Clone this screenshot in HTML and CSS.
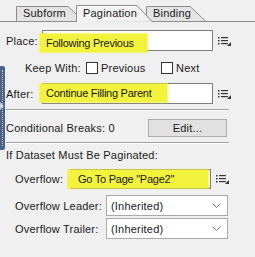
FILE: index.html
```html
<!DOCTYPE html>
<html lang="en">
<head>
    <meta charset="UTF-8">
    <title>Pagination</title>
    <link rel="stylesheet" href="styles.css">
</head>
<body>
    <div class="grip"><span class="grip-arrow"></span></div>
    <svg class="tabs" width="255" height="22" viewBox="0 0 255 22">
        <path d="M146.5 21.5 V6.5 H190 L206 21.5" fill="#e4e4e4" stroke="#8c8c8c"/>
        <path d="M16.5 21.5 V6.5 H68 L84 21.5" fill="#e4e4e4" stroke="#8c8c8c"/>
        <line x1="0" y1="21.5" x2="255" y2="21.5" stroke="#8c8c8c"/>
        <path d="M76.5 22 V5.5 H137 L152 21.5 H255" fill="#f2f2f2" stroke="#8c8c8c"/>
        <path d="M77.5 22 V6.5 H136.5" fill="none" stroke="#ffffff"/>
        <text x="23" y="17">Subform</text>
        <text x="83" y="17">Pagination</text>
        <text x="153" y="17">Binding</text>
    </svg>
    <div class="form">
        <div class="row place">
            <span class="label">Place:</span>
            <div class="field"><span class="hl hl-place">Following Previous</span></div>
            <svg class="list-icon" width="13" height="9" viewBox="0 0 13 9">
                <rect x="0" y="0" width="1.5" height="1.5" fill="#333"/>
                <rect x="0" y="3" width="1.5" height="1.5" fill="#333"/>
                <rect x="0" y="6" width="1.5" height="1.5" fill="#333"/>
                <rect x="3" y="0" width="7" height="1.2" fill="#333"/>
                <rect x="3" y="3" width="7" height="1.2" fill="#333"/>
                <rect x="3" y="6" width="7" height="1.2" fill="#333"/>
                <path d="M13 5 V9 H9 Z" fill="#333"/>
            </svg>
        </div>
        <div class="row keep">
            <span class="keep-label">Keep With:</span>
            <span class="check"></span><span class="check-text">Previous</span>
            <span class="check check-next"></span><span class="check-text">Next</span>
        </div>
        <div class="row after">
            <span class="label">After:</span>
            <div class="field"><span class="hl hl-after">Continue Filling Parent</span></div>
            <svg class="list-icon" width="13" height="9" viewBox="0 0 13 9">
                <rect x="0" y="0" width="1.5" height="1.5" fill="#333"/>
                <rect x="0" y="3" width="1.5" height="1.5" fill="#333"/>
                <rect x="0" y="6" width="1.5" height="1.5" fill="#333"/>
                <rect x="3" y="0" width="7" height="1.2" fill="#333"/>
                <rect x="3" y="3" width="7" height="1.2" fill="#333"/>
                <rect x="3" y="6" width="7" height="1.2" fill="#333"/>
                <path d="M13 5 V9 H9 Z" fill="#333"/>
            </svg>
        </div>
        <div class="sep sep-one"></div>
        <div class="row breaks">
            <span class="breaks-label">Conditional Breaks: 0</span>
            <button class="edit">Edit...</button>
        </div>
        <div class="sep sep-two"></div>
        <div class="heading">If Dataset Must Be Paginated:</div>
        <div class="row overflow">
            <span class="sub-label">Overflow:</span>
            <div class="field field-overflow"><span class="hl hl-overflow">Go To Page "Page2"</span></div>
            <svg class="list-icon" width="13" height="9" viewBox="0 0 13 9">
                <rect x="0" y="0" width="1.5" height="1.5" fill="#333"/>
                <rect x="0" y="3" width="1.5" height="1.5" fill="#333"/>
                <rect x="0" y="6" width="1.5" height="1.5" fill="#333"/>
                <rect x="3" y="0" width="7" height="1.2" fill="#333"/>
                <rect x="3" y="3" width="7" height="1.2" fill="#333"/>
                <rect x="3" y="6" width="7" height="1.2" fill="#333"/>
                <path d="M13 5 V9 H9 Z" fill="#333"/>
            </svg>
        </div>
        <div class="row select-row leader">
            <span class="sub-label select-label">Overflow Leader:</span>
            <div class="select">
                <span>(Inherited)</span>
                <svg width="9" height="5" viewBox="0 0 9 5"><path d="M0.5 0.5 L4.5 4.5 L8.5 0.5" fill="none" stroke="#7a7a7a"/></svg>
            </div>
        </div>
        <div class="row select-row trailer">
            <span class="sub-label select-label">Overflow Trailer:</span>
            <div class="select">
                <span>(Inherited)</span>
                <svg width="9" height="5" viewBox="0 0 9 5"><path d="M0.5 0.5 L4.5 4.5 L8.5 0.5" fill="none" stroke="#7a7a7a"/></svg>
            </div>
        </div>
    </div>
</body>
</html>
```

FILE: styles.css
```css
:root {
    --bg: #f0f0f0;
    --text: #1a1a1a;
    --yellow: #f3f33e;
    --field-border: #7d7d7d;
    --select-border: #a9a9a9;
}
* {
    box-sizing: border-box;
}
body {
    margin: 0;
    background: var(--bg);
    color: var(--text);
    font-family: "Liberation Sans", Arial, sans-serif;
    font-size: 11px;
    letter-spacing: 0.2px;
    position: relative;
    height: 257px;
    overflow: hidden;
}
/* splitter grip on the left edge */
.grip {
    position: absolute;
    left: 0;
    top: 66px;
    width: 5px;
    height: 84px;
    background: #4e6284;
    border-radius: 0 2px 2px 0;
}
.grip::before {
    content: "";
    position: absolute;
    left: 2px;
    top: 4px;
    bottom: 4px;
    border-left: 1px dotted #b8c4d8;
}
.grip-arrow {
    position: absolute;
    left: 0;
    top: 36px;
    border-left: 4px solid #c8d2e2;
    border-top: 4px solid transparent;
    border-bottom: 4px solid transparent;
}
.tabs {
    display: block;
}
.tabs text {
    font-family: "Liberation Sans", Arial, sans-serif;
    font-size: 11px;
    letter-spacing: 0.2px;
    fill: #1a1a1a;
}
.form {
    padding-left: 6px;
}
.row {
    display: flex;
    align-items: center;
}
.label {
    width: 36px;
}
.field {
    width: 171px;
    height: 21px;
    background: #fff;
    border: 1px solid var(--field-border);
    display: flex;
    align-items: center;
}
.hl {
    background: var(--yellow);
    box-shadow: 0 0 1px 1px rgba(243, 243, 62, 0.6);
    display: flex;
    align-items: center;
    height: 18px;
    padding-left: 6px;
    margin-left: -3px;
    letter-spacing: -0.25px;
}
.hl-place {
    width: 107px;
    margin-top: 4px;
}
.hl-after {
    width: 127px;
    margin-top: -2px;
}
.hl-overflow {
    width: 140px;
    padding-left: 10px;
}
.list-icon {
    margin-left: 5px;
    margin-top: 1px;
}
.place {
    margin-top: 8px;
    height: 21px;
}
.keep {
    margin-top: 6px;
    height: 22px;
    padding-left: 19px;
}
.keep-label {
    width: 61px;
}
.check {
    width: 12px;
    height: 12px;
    background: #fff;
    border: 1px solid #333;
    margin-right: 3px;
}
.check-text {
    width: 60px;
}
.after {
    margin-top: 4px;
    height: 21px;
}
.sep {
    width: 223px;
    height: 2px;
    border-top: 1px solid #a0a0a0;
    border-bottom: 1px solid #fff;
}
.sep-one {
    margin-top: 5px;
}
.breaks {
    margin-top: 8px;
    height: 18px;
}
.breaks-label {
    width: 142px;
}
.edit {
    width: 79px;
    height: 18px;
    background: #e1e1e1;
    border: 1px solid #adadad;
    font-family: inherit;
    font-size: 11px;
    letter-spacing: 0.2px;
    color: var(--text);
    padding: 0;
    margin: 0;
}
.sep-two {
    margin-top: 5px;
}
.heading {
    margin-top: 4px;
    line-height: 14px;
}
.sub-label {
    padding-left: 9px;
}
.overflow {
    margin-top: 7px;
    height: 20px;
}
.overflow .sub-label {
    width: 64px;
}
.field-overflow {
    width: 141px;
    height: 20px;
}
.select-label {
    width: 100px;
}
.select {
    width: 122px;
    height: 21px;
    background: #fff;
    border: 1px solid var(--select-border);
    display: flex;
    align-items: center;
    justify-content: space-between;
    padding: 0 6px 0 4px;
}
.leader {
    margin-top: 6px;
}
.trailer {
    margin-top: 2px;
}
```
